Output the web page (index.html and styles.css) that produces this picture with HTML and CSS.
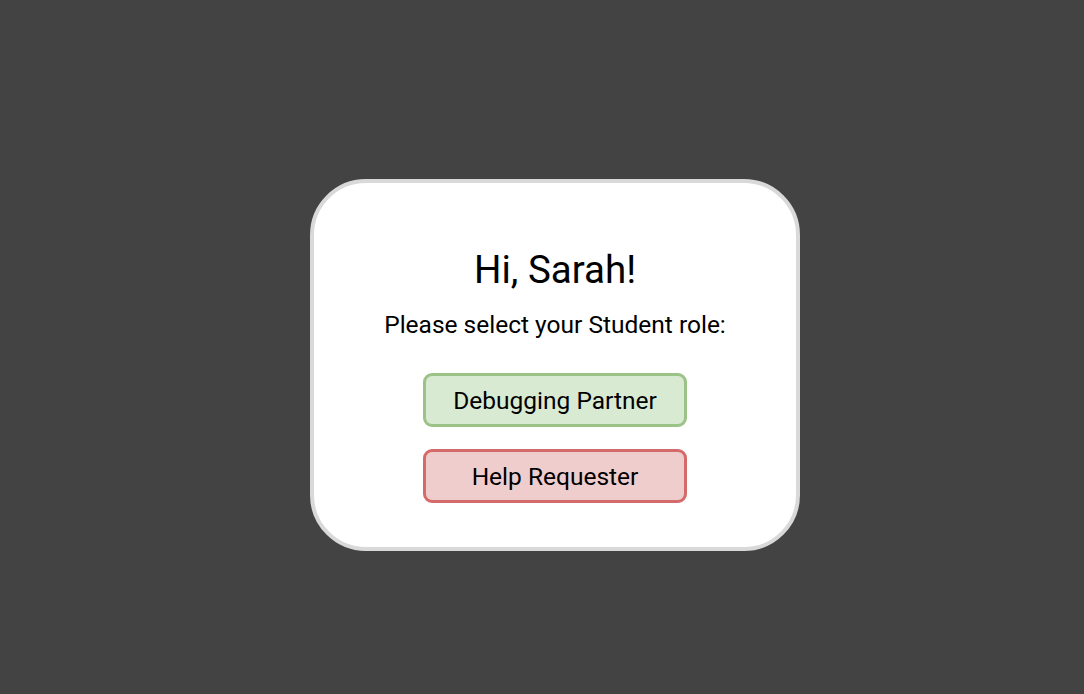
FILE: index.html
```html
<!DOCTYPE html>
<html lang="en">
<head>
    <meta charset="UTF-8">
    <meta name="viewport" content="width=device-width, initial-scale=1.0">
    <title>Select Role</title>
    <link rel="stylesheet" href="styles.css">
</head>
<body>
    <div class="card">
        <h1 class="greeting">Hi, Sarah!</h1>
        <p class="prompt">Please select your Student role:</p>
        <div class="roles">
            <button class="role green">Debugging Partner</button>
            <button class="role red">Help Requester</button>
        </div>
    </div>
</body>
</html>
```
FILE: styles.css
```css
body {
    margin: 0;
    height: 694px;
    background-color: #434343;
    font-family: Roboto, "Liberation Sans", sans-serif;
    padding: 179px 0 0 310px;
    box-sizing: border-box;
}
.card {
    width: 490px;
    height: 372px;
    box-sizing: border-box;
    background: white;
    border: 4px solid #d9d9d9;
    border-radius: 56px;
    display: flex;
    flex-direction: column;
    align-items: center;
    padding-top: 65px;
}
.greeting {
    margin: 0;
    font-size: 38.5px;
    font-weight: normal;
    line-height: 44px;
    color: black;
}
.prompt {
    margin: 19px 0 0;
    font-size: 24.5px;
    line-height: 28px;
    color: black;
}
.roles {
    display: flex;
    flex-direction: column;
    gap: 22px;
    margin-top: 34px;
}
.role {
    width: 264px;
    height: 54px;
    border-radius: 9px;
    border: 3px solid;
    font-family: inherit;
    font-size: 24.5px;
    color: black;
    cursor: pointer;
}
.green { background: #d9ead3; border-color: #9bc388; }
.red { background: #f0cdcd; border-color: #d46b6b; }
```
